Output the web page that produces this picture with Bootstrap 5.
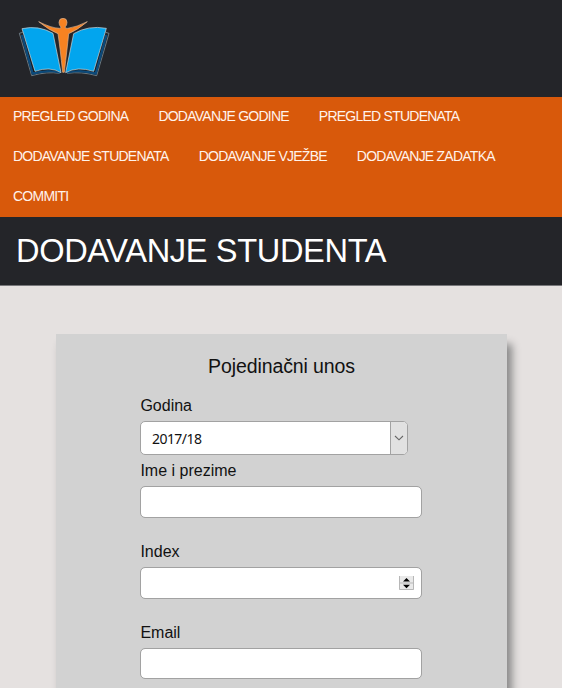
<!DOCTYPE html>
<html lang="hr">
<head>
<meta charset="utf-8">
<meta name="viewport" content="width=device-width, initial-scale=1">
<title>Dodavanje studenta</title>
<link href="https://cdn.jsdelivr.net/npm/bootstrap@5.3.0/dist/css/bootstrap.min.css" rel="stylesheet">
<style>
body{font-family:"Liberation Sans",Arial,sans-serif;background:#e5e1e0;color:#111;height:688px}
.site-head{background:#242529;height:97px;padding:10px}
.site-nav{background:#d8590b;height:120px;padding-left:13px}
.site-nav .nav-link{color:#fff3ec;font-size:14px;letter-spacing:-.76px;line-height:38px;padding-bottom:2px!important;margin-right:30px}
.page-title{background:#242529;height:69px;padding-left:16px;border-bottom:1px solid #77777a}
.page-title h1{font-size:32.6px;letter-spacing:-.35px;line-height:68px;color:#fff}
.entry-panel{width:451px;height:354px;margin:48px 0 0 56px;background:#d2d2d2;box-shadow:5px 10px 8px #888;padding:19px 84px 0;overflow:hidden}
.entry-panel h2{font-size:19.5px;letter-spacing:-.1px;line-height:26px;margin-bottom:17px}
.entry-panel label{font-size:16px;line-height:20px;margin-bottom:5px;padding-left:.4px;display:block}
.entry-panel .form-control{width:282px;height:32px;border:1px solid #a2a2a2;border-radius:5px;padding:0 7px}
.entry-panel #mail{height:31px}
.year-box{width:268px;height:34px;border:1px solid #a2a2a2;border-radius:5px;background:#fff;overflow:hidden;margin-bottom:6px}
.year-box .year-text{font:14px/34px "Noto Sans",sans-serif;letter-spacing:-.55px;padding-left:11px}
.year-box .year-arrow{width:17px;background:#e1e1e1;border-left:1px solid #a2a2a2}
</style>
</head>
<body class="overflow-hidden">
<header class="site-head">
<svg class="d-block" width="110" height="75" viewBox="0 0 330 225" role="img" aria-label="Logo">
<g fill="none" stroke-linejoin="round">
<path d="M38 67L28 70L65 197Q112 184 149 190M287 67L297 70L260 197Q214 184 171 190" stroke="#8ea3ad" stroke-width="2"/>
<path d="M36 75L68 191Q112 178 150 187M289 75L257 191Q214 178 171 187" stroke="#0b4a7b" stroke-width="7"/>
<path d="M41 69L72 184Q112 172 150 184M284 69L253 184Q214 172 171 184" stroke="#101b22" stroke-width="4"/>
</g>
<g stroke="#d5dadb" stroke-width="2" stroke-linejoin="round">
<path fill="#02a5ee" d="M36 56Q86 45 129 70L153 188Q120 168 75 184Z"/>
<path fill="#02a5ee" d="M289 55Q235 45 191 71L167 188Q202 168 251 184Z"/>
<path fill="#f78221" stroke="#d8b397" d="M86 35Q124 54 148 55Q153 56 153 51Q147 47 147 37Q147 25 159 25Q171 25 171 37Q171 47 165 51Q166 56 173 55Q200 51 232 35Q201 61 176 71Q172 112 163 187H158Q150 111 144 71Q118 61 86 35Z"/>
</g>
</svg>
</header>
<nav class="site-nav">
<ul class="nav">
<li class="nav-item"><a class="nav-link p-0" href="#">PREGLED GODINA</a></li>
<li class="nav-item"><a class="nav-link p-0" href="#">DODAVANJE GODINE</a></li>
<li class="nav-item"><a class="nav-link p-0" href="#">PREGLED STUDENATA</a></li>
<li class="nav-item"><a class="nav-link p-0" href="#">DODAVANJE STUDENATA</a></li>
<li class="nav-item"><a class="nav-link p-0" href="#">DODAVANJE VJEŽBE</a></li>
<li class="nav-item"><a class="nav-link p-0" href="#">DODAVANJE ZADATKA</a></li>
<li class="nav-item"><a class="nav-link p-0" href="#">COMMITI</a></li>
</ul>
</nav>
<div class="page-title"><h1 class="m-0 fw-normal">DODAVANJE STUDENTA</h1></div>
<main class="entry-panel">
<h2 class="text-center fw-normal">Pojedinačni unos</h2>
<label>Godina</label>
<div class="year-box d-flex">
<span class="year-text flex-grow-1">2017/18</span>
<span class="year-arrow d-flex align-items-center justify-content-center"><svg width="10" height="6" viewBox="0 0 10 6" fill="none" stroke="#666" stroke-width="1.1"><path d="M1 1L5 4.8L9 1"/></svg></span>
</div>
<label for="ime">Ime i prezime</label>
<input id="ime" class="form-control mb-4" type="text">
<label for="idx">Index</label>
<div class="form-control d-flex align-items-center justify-content-end mb-4" id="idx">
<svg width="15" height="14" viewBox="0 0 15 14"><path fill="#e9e9e9" d="M0 0h15v14H0z"/><path d="M.5 0v13.5h14V0M0 7h15" fill="none" stroke="#b7b7b7"/><path d="M4 5.5L7.5 2L11 5.5ZM4 8.8H11L7.5 12.3Z" fill="#000"/></svg>
</div>
<label for="mail">Email</label>
<input id="mail" class="form-control" type="email">
</main>
<script src="https://cdn.jsdelivr.net/npm/bootstrap@5.3.0/dist/js/bootstrap.bundle.min.js"></script>
</body>
</html>
